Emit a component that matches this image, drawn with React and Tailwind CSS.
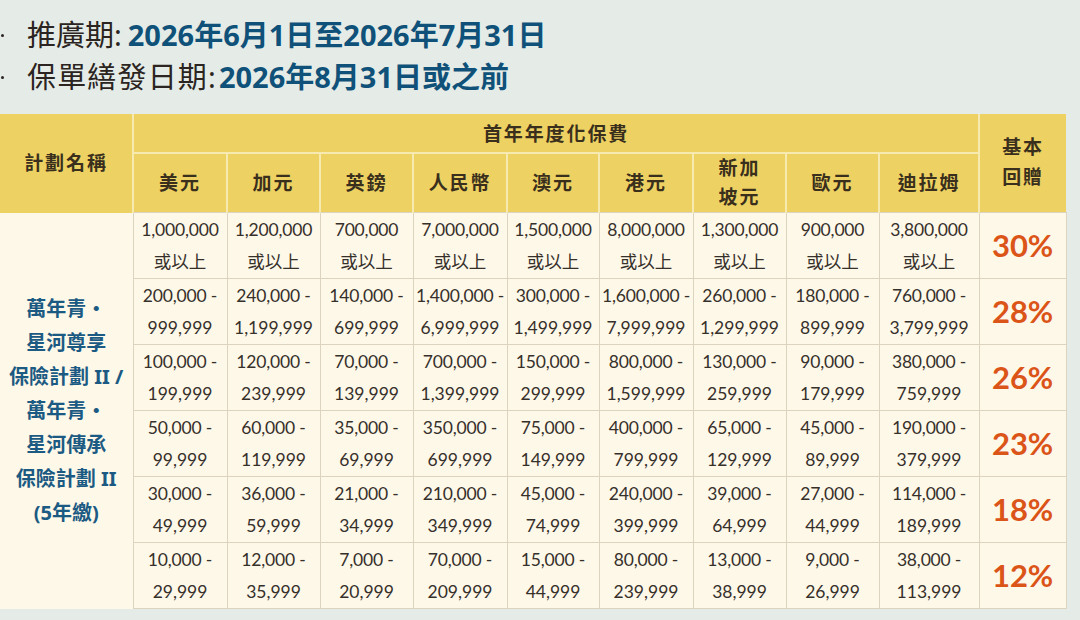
const CURRENCIES = [
  { label: '美元', w: 94 },
  { label: '加元', w: 93 },
  { label: '英鎊', w: 93 },
  { label: '人民幣', w: 94 },
  { label: '澳元', w: 92 },
  { label: '港元', w: 94 },
  { label: ['新加', '坡元'], w: 93 },
  { label: '歐元', w: 93 },
  { label: '迪拉姆', w: 100 },
];

const ROWS = [
  {
    rate: '30%',
    cells: [
      ['1,000,000', '或以上'], ['1,200,000', '或以上'], ['700,000', '或以上'], ['7,000,000', '或以上'],
      ['1,500,000', '或以上'], ['8,000,000', '或以上'], ['1,300,000', '或以上'], ['900,000', '或以上'],
      ['3,800,000', '或以上'],
    ],
  },
  {
    rate: '28%',
    cells: [
      ['200,000 -', '999,999'], ['240,000 -', '1,199,999'], ['140,000 -', '699,999'], ['1,400,000 -', '6,999,999'],
      ['300,000 -', '1,499,999'], ['1,600,000 -', '7,999,999'], ['260,000 -', '1,299,999'], ['180,000 -', '899,999'],
      ['760,000 -', '3,799,999'],
    ],
  },
  {
    rate: '26%',
    cells: [
      ['100,000 -', '199,999'], ['120,000 -', '239,999'], ['70,000 -', '139,999'], ['700,000 -', '1,399,999'],
      ['150,000 -', '299,999'], ['800,000 -', '1,599,999'], ['130,000 -', '259,999'], ['90,000 -', '179,999'],
      ['380,000 -', '759,999'],
    ],
  },
  {
    rate: '23%',
    cells: [
      ['50,000 -', '99,999'], ['60,000 -', '119,999'], ['35,000 -', '69,999'], ['350,000 -', '699,999'],
      ['75,000 -', '149,999'], ['400,000 -', '799,999'], ['65,000 -', '129,999'], ['45,000 -', '89,999'],
      ['190,000 -', '379,999'],
    ],
  },
  {
    rate: '18%',
    cells: [
      ['30,000 -', '49,999'], ['36,000 -', '59,999'], ['21,000 -', '34,999'], ['210,000 -', '349,999'],
      ['45,000 -', '74,999'], ['240,000 -', '399,999'], ['39,000 -', '64,999'], ['27,000 -', '44,999'],
      ['114,000 -', '189,999'],
    ],
  },
  {
    rate: '12%',
    cells: [
      ['10,000 -', '29,999'], ['12,000 -', '35,999'], ['7,000 -', '20,999'], ['70,000 -', '209,999'],
      ['15,000 -', '44,999'], ['80,000 -', '239,999'], ['13,000 -', '38,999'], ['9,000 -', '26,999'],
      ['38,000 -', '113,999'],
    ],
  },
];

const PLAN_LINES = ['萬年青・', '星河尊享', '保險計劃 II /', '萬年青・', '星河傳承', '保險計劃 II', '(5年繳)'];

const CJK = "font-['Noto_Sans','Noto_Sans_CJK_TC',sans-serif]";
const NUM = "font-['Lato','Noto_Sans_CJK_TC',sans-serif]";

const App = () => {
  return (
    <div className={`w-[1080px] h-[620px] overflow-hidden bg-[#e5ece7] ${CJK}`}>
      {/* Promo dates */}
      <div className="pt-[14px] mb-[16px] text-[29px] leading-[42px] text-[#2b2421]">
        <div className="flex items-center">
          <span className="w-[3px] h-[3px] rounded-full bg-[#2b2421] ml-[1px] mr-[23px]" />
          <span>推廣期: </span>
          <span className="ml-[6px] font-bold text-[#0f5179]">2026年6月1日至2026年7月31日</span>
        </div>
        <div className="flex items-center">
          <span className="w-[3px] h-[3px] rounded-full bg-[#2b2421] ml-[1px] mr-[23px]" />
          <span className="tracking-[0.04em]">保單繕發日期:</span>
          <span className="ml-[2px] font-bold text-[#0f5179]">2026年8月31日或之前</span>
        </div>
      </div>

      {/* Rate table */}
      <table className="table-fixed border-collapse w-[1066px]">
        <colgroup>
          <col className="w-[133px]" />
          {CURRENCIES.map((c, i) => (
            <col key={i} style={{ width: c.w }} />
          ))}
          <col className="w-[87px]" />
        </colgroup>
        <thead className="bg-[#edd263] text-[#3a2f1c] font-bold text-[19px] tracking-[0.1em]">
          <tr className="h-[39px]">
            <th rowSpan={2} className="border-r-2 border-[#f7eab0] font-bold">計劃名稱</th>
            <th colSpan={9} className="border-b-2 border-[#f7eab0] font-bold align-middle pt-[2px]">首年年度化保費</th>
            <th rowSpan={2} className="border-l-2 border-[#f7eab0] font-bold leading-[30px] align-top pt-[18px]">
              基本
              <br />
              回贈
            </th>
          </tr>
          <tr className="h-[57px]">
            {CURRENCIES.map((c, i) => (
              <th
                key={i}
                className={`font-bold leading-[29px] ${i > 0 ? 'border-l-2 border-[#f7eab0]' : ''}`}
              >
                {Array.isArray(c.label) ? (
                  <>
                    {c.label[0]}
                    <br />
                    {c.label[1]}
                  </>
                ) : (
                  c.label
                )}
              </th>
            ))}
          </tr>
        </thead>
        <tbody className="bg-[#fef8e9]">
          {ROWS.map((row, r) => (
            <tr key={r} className="h-[66px]">
              {r === 0 && (
                <td rowSpan={ROWS.length} className="border-r border-[#ddd4c0] text-center align-middle">
                  <div className="text-[20px] leading-[34px] font-bold text-[#1b5a82] whitespace-nowrap">
                    {PLAN_LINES.map((line, i) => (
                      <div key={i}>{line}</div>
                    ))}
                  </div>
                </td>
              )}
              {row.cells.map((cell, c) => (
                <td
                  key={c}
                  className={`border border-[#ddd4c0] text-center whitespace-nowrap text-[17.5px] leading-[32px] text-[#36302b] ${NUM}`}
                >
                  <div className="tracking-[-0.01em]">{cell[0]}</div>
                  <div>{cell[1]}</div>
                </td>
              ))}
              <td className={`border border-[#ddd4c0] text-center text-[31px] font-bold text-[#db5418] ${NUM}`}>
                {row.rate}
              </td>
            </tr>
          ))}
        </tbody>
      </table>
    </div>
  );
};

export default App;
